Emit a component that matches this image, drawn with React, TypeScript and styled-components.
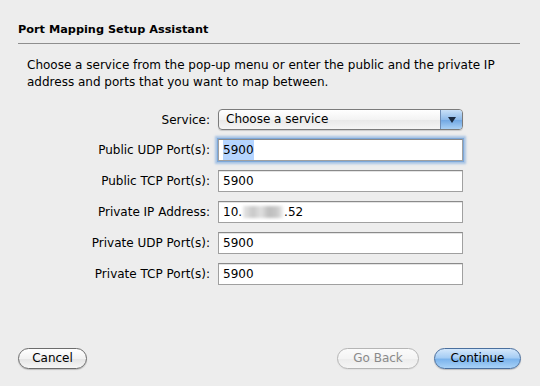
import React from "react";
import styled, { createGlobalStyle } from "styled-components";

const Global = createGlobalStyle`
  html, body { margin: 0; padding: 0; }
  body {
    background: #ededed;
    font-family: "DejaVu Sans", "Liberation Sans", sans-serif;
    color: #000;
    width: 540px;
    height: 386px;
    overflow: hidden;
  }
`;

const Window = styled.div`
  width: 540px;
  height: 386px;
  box-sizing: border-box;
  display: flex;
  flex-direction: column;
  padding: 22px 20px 17px 18px;
`;

const Title = styled.div`
  font-size: 11.3px;
  font-weight: bold;
  line-height: 15px;
  padding-bottom: 6px;
`;

const Divider = styled.div`
  height: 1px;
  background: #8e8e8e;
`;

const Description = styled.p`
  margin: 13px 0 0 9px;
  font-size: 12px;
  line-height: 17px;
`;

const Form = styled.div`
  display: grid;
  grid-template-columns: 192px 245px;
  column-gap: 8px;
  row-gap: 9px;
  align-items: center;
  margin-top: 18px;
`;

const Label = styled.label`
  text-align: right;
  font-size: 12px;
  white-space: nowrap;
`;

const Popup = styled.div`
  height: 21px;
  box-sizing: border-box;
  border: 1px solid #7b7b7b;
  border-radius: 4px;
  background: linear-gradient(#ffffff, #f3f3f3 50%, #e8e8e8 51%, #f5f5f5);
  display: flex;
  align-items: stretch;
  overflow: hidden;
  box-shadow: 0 1px 1px rgba(0,0,0,0.15);
`;

const PopupText = styled.span`
  flex: 1;
  font-size: 12px;
  line-height: 19px;
  padding-left: 7px;
`;

const PopupArrow = styled.span`
  width: 21px;
  border-left: 1px solid #6f8db5;
  background: linear-gradient(#c9e0f7, #8fbbea 50%, #6ea5e2 51%, #a9d0f5);
  display: flex;
  align-items: center;
  justify-content: center;
`;

const Field = styled.div<{ $focused?: boolean }>`
  height: 22px;
  box-sizing: border-box;
  background: #fff;
  border: 1px solid #a0a0a0;
  border-top-color: #8a8a8a;
  box-shadow: ${(p) =>
    p.$focused
      ? "0 0 0 1px #7ea8d8, 0 0 2px 3px rgba(110,160,220,0.55)"
      : "inset 0 1px 0 #e4e4e4"};
  font-size: 12px;
  line-height: 20px;
  padding-left: 4px;
  display: flex;
  align-items: center;
`;

const Selected = styled.span`
  background: #b5d5ff;
`;

const Blur = styled.span`
  display: inline-block;
  width: 40px;
  height: 12px;
  margin: 0 1px;
  background: linear-gradient(90deg, #e8e8e8, #c8c8c8 25%, #e0e0e0 45%, #bdbdbd 65%, #c9c9c9 85%, #ececec);
  filter: blur(1.5px);
`;

const Spacer = styled.div`
  flex: 1;
`;

const Footer = styled.div`
  display: flex;
  align-items: center;
  padding-right: 0;
  margin-right: -1px;
`;

const Button = styled.button<{ $primary?: boolean; $disabled?: boolean; $w: number }>`
  width: ${(p) => p.$w}px;
  height: 21px;
  box-sizing: border-box;
  padding: 0;
  border-radius: 11px;
  font-family: inherit;
  font-size: 12px;
  line-height: 19px;
  color: ${(p) => (p.$disabled ? "#8a8a8a" : "#000")};
  border: 1px solid ${(p) => (p.$primary ? "#4a6f9e" : p.$disabled ? "#b5b5b5" : "#6c6c6c")};
  background: ${(p) =>
    p.$primary
      ? "linear-gradient(#d3e7fb, #a6cdf4 45%, #7cb4ec 55%, #a8d2f7)"
      : p.$disabled
      ? "linear-gradient(#fbfbfb, #f4f4f4 50%, #ececec 51%, #f5f5f5)"
      : "linear-gradient(#ffffff, #f2f2f2 50%, #e4e4e4 51%, #f6f6f6)"};
  box-shadow: 0 1px 1px rgba(0,0,0,${(p) => (p.$disabled ? 0.05 : 0.2)});
`;

const LeftButtons = styled.div`
  display: flex;
`;

const RightButtons = styled.div`
  display: flex;
  gap: 15px;
  margin-left: auto;
`;

const fields = [
  { label: "Public TCP Port(s):", value: "5900" },
];

export default function App() {
  return (
    <>
      <Global />
      <Window>
        <Title>Port Mapping Setup Assistant</Title>
        <Divider />
        <Description>
          Choose a service from the pop-up menu or enter the public and the private IP
          <br />
          address and ports that you want to map between.
        </Description>
        <Form>
          <Label>Service:</Label>
          <Popup>
            <PopupText>Choose a service</PopupText>
            <PopupArrow>
              <svg width="8" height="6" viewBox="0 0 8 6">
                <path d="M0 0 L8 0 L4 6 Z" fill="#1a2a40" />
              </svg>
            </PopupArrow>
          </Popup>
          <Label>Public UDP Port(s):</Label>
          <Field $focused>
            <Selected>5900</Selected>
          </Field>
          {fields.map((f) => (
            <React.Fragment key={f.label}>
              <Label>{f.label}</Label>
              <Field>{f.value}</Field>
            </React.Fragment>
          ))}
          <Label>Private IP Address:</Label>
          <Field>
            10.<Blur />.52
          </Field>
          <Label>Private UDP Port(s):</Label>
          <Field>5900</Field>
          <Label>Private TCP Port(s):</Label>
          <Field>5900</Field>
        </Form>
        <Spacer />
        <Footer>
          <LeftButtons>
            <Button $w={69}>Cancel</Button>
          </LeftButtons>
          <RightButtons>
            <Button $w={82} $disabled>Go Back</Button>
            <Button $w={87} $primary>Continue</Button>
          </RightButtons>
        </Footer>
      </Window>
    </>
  );
}
